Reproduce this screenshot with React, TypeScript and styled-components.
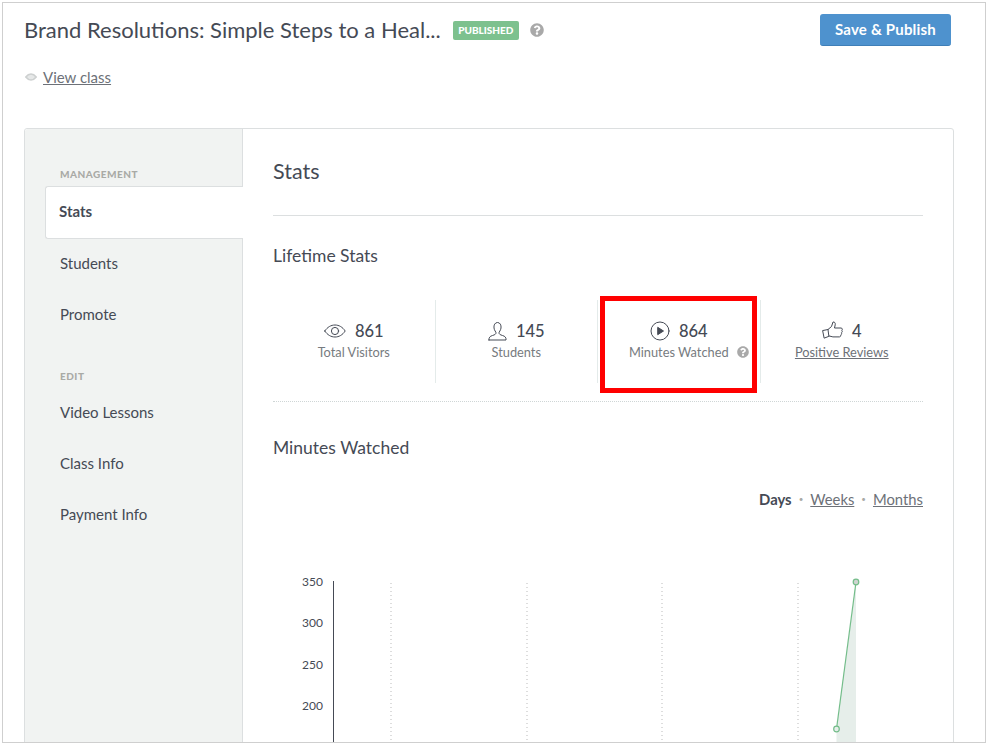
import React from 'react';
import styled, {createGlobalStyle} from 'styled-components';
import {FaQuestionCircle} from 'react-icons/fa';

const GlobalStyle = createGlobalStyle`
  html, body {
    margin: 0;
    padding: 0;
    background: #fff;
  }
  body {
    font-family: Lato, "Open Sans", sans-serif;
    color: #454a55;
  }
`;

const Frame = styled.div`
  box-sizing: border-box;
  width: 984px;
  height: 741px;
  margin: 2px 0 0 2px;
  border: 1px solid #cfcfcf;
  overflow: hidden;
`;

const Header = styled.header`
  display: flex;
  align-items: flex-start;
  justify-content: space-between;
  padding: 11px 34px 0 21px;
`;

const TitleRow = styled.div`
  display: flex;
  align-items: center;
  height: 32px;
`;

const Title = styled.h1`
  margin: 0;
  padding-bottom: 2px;
  font-size: 22px;
  font-weight: 400;
  color: #454a55;
  white-space: nowrap;
`;

const Badge = styled.span`
  margin-left: 12px;
  padding: 0 5.5px;
  height: 19px;
  line-height: 19px;
  border-radius: 2px;
  background: #7dc18e;
  color: #fff;
  font-size: 10px;
  font-weight: 900;
`;

const HelpIcon = styled(FaQuestionCircle)<{$size: number}>`
  width: ${p => p.$size}px;
  height: ${p => p.$size}px;
  color: #a9a9a9;
  flex: none;
`;

const TitleHelp = styled.span`
  display: flex;
  margin-left: 11px;
`;

const SaveButton = styled.button`
  width: 131px;
  height: 32px;
  padding: 0 0 2px;
  border: 0;
  border-bottom: 1px solid #3f7fb8;
  border-radius: 3px;
  background: #4e92ce;
  color: #fff;
  font-family: inherit;
  font-size: 15px;
  font-weight: 700;
  letter-spacing: 0.2px;
`;

const ViewRow = styled.div`
  display: flex;
  align-items: center;
  gap: 6px;
  margin: 21px 0 0 22px;
  height: 20px;
`;

const TextLink = styled.a`
  color: #6d7178;
  font-size: 15px;
  text-decoration: underline;
`;

const Card = styled.section`
  display: flex;
  box-sizing: border-box;
  width: 930px;
  height: 700px;
  margin: 41px 0 0 21px;
  border: 1px solid #dcdfe0;
  border-radius: 3px;
`;

const Sidebar = styled.nav`
  box-sizing: border-box;
  flex: none;
  width: 218px;
  padding: 39px 0 0 20px;
  background: #f1f3f2;
  border-right: 1px solid #dcdfe0;
  border-radius: 3px 0 0 3px;
`;

const SideHeading = styled.div<{$gap?: number}>`
  height: 18px;
  line-height: 13px;
  margin-top: ${p => p.$gap || 0}px;
  padding-left: 15px;
  color: #a9aaa6;
  font-size: 10px;
  font-weight: 900;
  letter-spacing: 0.5px;
`;

const SideItem = styled.div<{$active?: boolean}>`
  box-sizing: border-box;
  height: ${p => (p.$active ? 53 : 51)}px;
  line-height: 49px;
  padding-left: ${p => (p.$active ? 13 : 15)}px;
  font-size: 15px;
  color: #454a55;
  ${p =>
    p.$active
      ? `
    position: relative;
    width: 198px;
    margin-right: -1px;
    background: #fff;
    border: 1px solid #dcdfe0;
    border-right: 0;
    border-radius: 3px 0 0 3px;
    font-weight: 700;
  `
      : ''}
`;

const Main = styled.main`
  position: relative;
  flex: 1;
  min-width: 0;
  padding: 0 30px;
`;

const PageTitle = styled.h2`
  box-sizing: border-box;
  height: 87px;
  margin: 0;
  padding-top: 28px;
  line-height: 29px;
  border-bottom: 1px solid #dcdfe0;
  font-size: 21.5px;
  font-weight: 400;
  color: #454a55;
`;

const SectionTitle = styled.h3<{$top: number}>`
  margin: ${p => p.$top}px 0 0;
  height: 22px;
  line-height: 22px;
  font-size: 17.5px;
  font-weight: 400;
  color: #454a55;
`;

const StatsRow = styled.div`
  display: grid;
  grid-template-columns: repeat(4, 1fr);
  box-sizing: border-box;
  height: 108px;
  margin-top: 27px;
  padding: 6px 0 18px;
  border-bottom: 1px dotted #cfd6d6;
`;

const StatCell = styled.div<{$last?: boolean}>`
  display: flex;
  flex-direction: column;
  align-items: center;
  padding-top: 20px;
  border-right: ${p => (p.$last ? '0' : '1px solid #e4ebea')};
`;

const StatValue = styled.div`
  display: flex;
  align-items: center;
  gap: 9px;
  height: 22px;
  font-size: 16.5px;
  font-weight: 500;
  color: #454a55;
`;

const StatLabel = styled.div`
  display: flex;
  align-items: center;
  gap: 8px;
  height: 18px;
  margin-top: 1px;
  color: #777b80;
  font-size: 12.8px;
`;

// the help icon hangs off the right, the words stay centred in the cell
const HelpLabel = styled(StatLabel)`
  padding-left: 20px;
`;

const ReviewLink = styled(TextLink)`
  font-size: 12.8px;
`;

const Highlight = styled.div`
  position: absolute;
  left: 357px;
  top: 167px;
  box-sizing: border-box;
  width: 157px;
  height: 97px;
  border: 5px solid #f00;
  pointer-events: none;
`;

const RangeRow = styled.div`
  display: flex;
  justify-content: flex-end;
  align-items: center;
  gap: 7px;
  height: 20px;
  margin-top: 30px;
  font-size: 14.8px;
`;

const RangeLink = styled(TextLink)`
  font-size: 14.8px;
`;

const RangeActive = styled.span`
  font-weight: 700;
  color: #454a55;
`;

const RangeDot = styled.span`
  color: #a9aaa6;
  font-size: 8px;
`;

const ChartSvg = styled.svg`
  display: block;
  margin-top: 61px;
`;

const AxisLabel = styled.text`
  font-family: Lato, sans-serif;
  font-size: 12px;
  fill: #454a55;
  text-anchor: end;
`;

const Line = (props: React.SVGProps<SVGSVGElement>) => (
  <svg
    fill="none"
    stroke="#454a55"
    strokeWidth="1"
    strokeLinecap="round"
    strokeLinejoin="round"
    {...props}
  />
);

const StatEye = () => (
  <Line viewBox="0 0 22 14" width="22" height="14">
    <path d="M.8 7C3.500 3 7 1 11 1s7.500 2 10.200 6C18.500 11 15 13 11 13S3.500 11 .8 7Z" />
    <circle cx="11" cy="7" r="3.600" />
  </Line>
);

const SmallEye = () => (
  <Line viewBox="0 0 12 8" width="12" height="8" stroke="#cdd0d0" strokeWidth="1.600">
    <path d="M.8 4C2.400 2 4 1 6 1s3.600 1 5.200 3C9.600 6 8 7 6 7S2.400 6 .8 4Z" fill="#e6e8e8" />
  </Line>
);

const UserIcon = () => (
  <Line viewBox="0 0 19 19" width="19" height="19">
    <path d="M1 18h17c.3-2.500-1-3.800-3.500-4.500-2.500-.8-3.500-1.400-3.500-2.700 0-.9 1.700-2.300 2-4.800.4-3-1-5.500-3.500-5.500S5.600 3 6 6c.3 2.500 2 3.900 2 4.800 0 1.300-1 1.900-3.500 2.700C2 14.200.7 15.500 1 18Z" />
  </Line>
);

const PlayIcon = () => (
  <Line viewBox="0 0 20 20" width="20" height="20">
    <circle cx="10" cy="10" r="9" />
    <path d="M8 6.500 13.500 10 8 13.500Z" fill="#454a55" />
  </Line>
);

const ThumbIcon = () => (
  <Line viewBox="0 0 21 20" width="21" height="20">
    <path d="M1 9.500 6 8.500l3.500-3L11 1c1.700-.3 2.600 1.200 2.200 2.800L12.500 7H19c1.400 0 1.700 1.700.8 2.400.8.700.6 2-.4 2.400.5.800.2 1.800-.7 2.200.3 1-.3 1.900-1.300 1.900h-6.500l-3.500-.9-1 .5L2.500 17Z" />
    <path d="M6 8.500l.9 7" />
  </Line>
);

const App: React.FC = () => {
  const gridLines = [118, 254, 389, 525];
  const axisLabels = [
    {text: '350', y: 12},
    {text: '300', y: 53},
    {text: '250', y: 95},
    {text: '200', y: 136}
  ];

  return (
    <Frame>
      <GlobalStyle />
      <Header>
        <TitleRow>
          <Title>Brand Resolutions: Simple Steps to a Heal...</Title>
          <Badge>PUBLISHED</Badge>
          <TitleHelp>
            <HelpIcon $size={14} />
          </TitleHelp>
        </TitleRow>
        <SaveButton>Save &amp; Publish</SaveButton>
      </Header>
      <ViewRow>
        <SmallEye />
        <TextLink>View class</TextLink>
      </ViewRow>
      <Card>
        <Sidebar>
          <SideHeading>MANAGEMENT</SideHeading>
          <SideItem $active>Stats</SideItem>
          <SideItem>Students</SideItem>
          <SideItem>Promote</SideItem>
          <SideHeading $gap={29}>EDIT</SideHeading>
          <SideItem>Video Lessons</SideItem>
          <SideItem>Class Info</SideItem>
          <SideItem>Payment Info</SideItem>
        </Sidebar>
        <Main>
          <PageTitle>Stats</PageTitle>
          <SectionTitle $top={29}>Lifetime Stats</SectionTitle>
          <StatsRow>
            <StatCell>
              <StatValue>
                <StatEye />
                861
              </StatValue>
              <StatLabel>Total Visitors</StatLabel>
            </StatCell>
            <StatCell>
              <StatValue>
                <UserIcon />
                145
              </StatValue>
              <StatLabel>Students</StatLabel>
            </StatCell>
            <StatCell>
              <StatValue>
                <PlayIcon />
                864
              </StatValue>
              <HelpLabel>
                Minutes Watched
                <HelpIcon $size={12} />
              </HelpLabel>
            </StatCell>
            <StatCell $last>
              <StatValue>
                <ThumbIcon />4
              </StatValue>
              <StatLabel>
                <ReviewLink>Positive Reviews</ReviewLink>
              </StatLabel>
            </StatCell>
          </StatsRow>
          <SectionTitle $top={35}>Minutes Watched</SectionTitle>
          <RangeRow>
            <RangeActive>Days</RangeActive>
            <RangeDot>•</RangeDot>
            <RangeLink>Weeks</RangeLink>
            <RangeDot>•</RangeDot>
            <RangeLink>Months</RangeLink>
          </RangeRow>
          <Highlight />
          <ChartSvg width="650" height="180" viewBox="0 0 650 180">
            {gridLines.map(x => (
              <line
                key={x}
                x1={x}
                x2={x}
                y1="13"
                y2="180"
                stroke="#bbb"
                strokeDasharray="1 3"
              />
            ))}
            <line x1="60.500" x2="60.500" y1="11" y2="180" stroke="#454a55" />
            {axisLabels.map(label => (
              <AxisLabel key={label.text} x="50" y={label.y + 4}>
                {label.text}
              </AxisLabel>
            ))}
            <path d="M563.500 159 583 12V180H563.500Z" fill="#e6eeea" />
            <path d="M563.500 159 583 12" stroke="#74bd8a" strokeWidth="1.200" fill="none" />
            <circle cx="563.500" cy="159" r="2.800" fill="#e6eeea" stroke="#74bd8a" strokeWidth="1.200" />
            <circle cx="583" cy="12" r="2.800" fill="#cfd4d0" stroke="#74bd8a" strokeWidth="1.200" />
          </ChartSvg>
        </Main>
      </Card>
    </Frame>
  );
};

export default App;
